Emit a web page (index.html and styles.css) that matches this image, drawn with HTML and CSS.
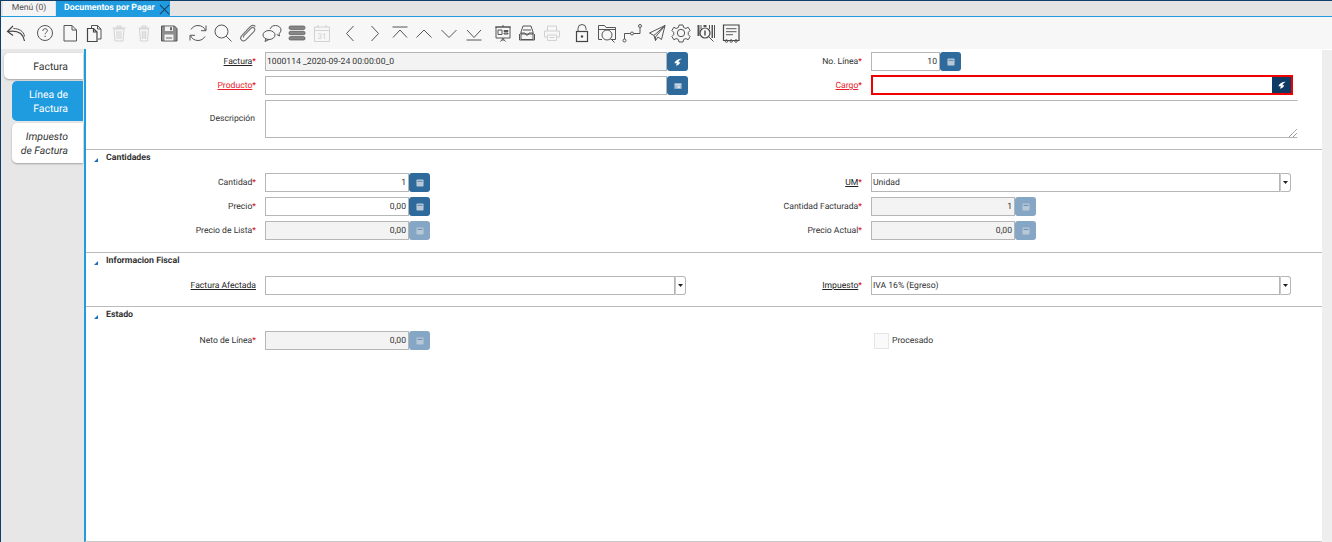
FILE: index.html
```html
<!DOCTYPE html>
<html lang="es">
<head>
<meta charset="utf-8">
<title>Documentos por Pagar</title>
<link rel="stylesheet" href="styles.css">
</head>
<body>
<svg class="defs" width="0" height="0" aria-hidden="true">
  <symbol id="calc" viewBox="-.5 -.5 9 9"><path d="M0 .8A.8.8 0 0 1 .8 0h6.400a.8.8 0 0 1 .8.8v6.400a.8.8 0 0 1-.8.8H.8a.8.8 0 0 1-.8-.8z" fill="#b8c8d7"/><path d="M1.200 1.600h5.600v1.100H1.200z" fill="#5f88ad"/></symbol>
  <symbol id="flash" viewBox="0 0 9 9"><path d="M8.800.8C5 .6 1.800 2.400.4 5.800h2.800L2.200 8.600C4.600 8.400 6.600 7 7 4.800H5C5.400 3.200 6.800 1.800 8.800.8z" fill="#fff"/></symbol>
  <symbol id="prod" viewBox="0 0 10 9"><path d="M.5 1h9v7h-9z" fill="#a9bfd3"/><path d="M1.500 2.300h7v1h-7z" fill="#dfe7ee"/><circle cx="6" cy="5.800" r="1.500" fill="#dfe7ee"/></symbol>
  <symbol id="caret" viewBox="0 0 5 3"><path d="M0 0h5L2.500 3z" fill="#222"/></symbol>
</svg>

<nav class="tabbar">
  <div class="tab">Menú (0)</div>
  <div class="tab tab-active">Documentos por Pagar
    <svg class="tab-x" viewBox="0 0 12 12"><path d="M1 1l10 10M11 1L1 11" stroke="#1c3f66" stroke-width="1.100" fill="none"/></svg>
  </div>
</nav>

<div class="toolbar">
  <span class="tool"><svg viewBox="0 0 24 24"><path d="M9 5L3.500 10.500 9 14.500" class="s2"/><path d="M4 10.500c7-1 15 0 16.500 9.500" class="s2"/><path d="M9.500 7.500c5 0 10.500 2.500 11 8" class="s1"/></svg></span>
  <span class="tool grp"><svg viewBox="0 0 24 24"><circle cx="12" cy="12" r="7.500" class="s1"/><path d="M9.800 10c0-3 4.600-3 4.600-.3 0 1.700-2.300 1.800-2.300 3.500" class="s1"/><path d="M11.500 14.700h1.200v1.400h-1.200z" fill="#555"/></svg></span>
  <span class="tool"><svg viewBox="0 0 24 24"><path d="M6 4.500h8l4.500 4.500v11H6zM14 4.500V9h4.500" class="s1"/></svg></span>
  <span class="tool"><svg viewBox="0 0 24 24"><path d="M9.500 7V4.500h6l3.500 3.500v10h-3M15.500 4.500V8H19" class="s1"/><path d="M5.500 7.500h6l3.500 3.500v9.500H5.500zM11.500 7.500V11H15" class="s2"/></svg></span>
  <span class="tool off"><svg viewBox="0 0 24 24"><path d="M7 8h10l-1 12H8zM5.500 7h13M10 5h4v2h-4zM10 10v8M12 10v8M14 10v8" class="s1"/></svg></span>
  <span class="tool off"><svg viewBox="0 0 24 24"><path d="M7.500 8h9l-1 12h-7zM6.500 7h11M10 5h4v2h-4zM10.300 10v8M12 10v8M13.700 10v8" class="s1"/></svg></span>
  <span class="tool nudge"><svg viewBox="0 0 24 24"><path d="M4.500 5h13l2.500 2.500V20H4.500z" fill="#8d8d8d" stroke="#555"/><path d="M8 5.500h8V10H8z" fill="#f2f2f2"/><path d="M13 6.200h2v3h-2z" fill="#666"/><path d="M7.500 13.500h9v6h-9z" fill="#f2f2f2"/><path d="M9 16.500h6v1H9z" fill="#666"/></svg></span>
  <span class="tool grp"><svg viewBox="0 0 24 24"><path d="M19.500 9.500C18.500 6.500 15.500 4.500 12 4.500c-3 0-5.500 1.500-7 4M4.500 14.500c1 3 4 5 7.500 5 3 0 5.500-1.500 7-4" class="s1"/><path d="M20 4.500v5.200h-5M4 19.500v-5.200h5" class="s1"/></svg></span>
  <span class="tool"><svg viewBox="0 0 24 24"><circle cx="10.500" cy="10.500" r="6.500" class="s1"/><path d="M15.200 15.200L20.500 20.500" class="s1"/></svg></span>
  <span class="tool"><svg viewBox="0 0 24 24"><path d="M19.500 5.500c-1.800-1.800-4-1.300-5.500.3l-8 8.500c-1.800 2-1.600 3.700-.5 4.800s3 1.200 4.600-.4l8-8.400c1-1.100.9-2.500 0-3.300s-2.200-.8-3.200.3l-7 7.300c-.7.800-.6 1.500-.2 1.900" class="s3"/></svg></span>
  <span class="tool"><svg viewBox="0 0 24 24"><ellipse cx="9" cy="14" rx="6" ry="4.500" class="s1"/><path d="M6 17.500l-1 3 4-2" class="s1"/><path d="M10 8c1-2.500 3.200-3.500 5.500-3.500 3 0 5.500 2 5.500 4.500 0 1.500-.8 2.800-2 3.600l.5 2.400-2.800-1.600" class="s1"/></svg></span>
  <span class="tool"><svg viewBox="0 0 24 24"><rect x="4" y="5" width="16" height="3.400" rx="1.500" fill="#888" stroke="#555" stroke-width=".7"/><rect x="4" y="10.300" width="16" height="3.400" rx="1.500" fill="#888" stroke="#555" stroke-width=".7"/><rect x="4" y="15.600" width="16" height="3.400" rx="1.500" fill="#888" stroke="#555" stroke-width=".7"/></svg></span>
  <span class="tool off"><svg viewBox="0 0 24 24"><path d="M4.500 6h15v14.500h-15zM4.500 9.500h15M8 4v3M16 4v3" class="s1"/><text x="12" y="18" class="cal">31</text></svg></span>
  <span class="tool grp"><svg viewBox="0 0 24 24"><path d="M15.500 5l-7 7.500 7 7.500" class="s1"/></svg></span>
  <span class="tool"><svg viewBox="0 0 24 24"><path d="M8.500 5l7 7.500-7 7.500" class="s1"/></svg></span>
  <span class="tool"><svg viewBox="0 0 24 24"><path d="M4.500 6h15M5 16.500L12 9l7 7.500" class="s1"/></svg></span>
  <span class="tool"><svg viewBox="0 0 24 24"><path d="M4.500 16.500L12 9l7.500 7.500" class="s1"/></svg></span>
  <span class="tool"><svg viewBox="0 0 24 24"><path d="M4.500 9l7.500 7.500L19.500 9" class="s1"/></svg></span>
  <span class="tool"><svg viewBox="0 0 24 24"><path d="M4.500 19h15M5 9l7 7.500L19 9" class="s1"/></svg></span>
  <span class="tool grp"><svg viewBox="-1 0 24 24"><path d="M5 6h14v11H5zM4 6h16M12 4v2M12 17v3M9.500 20.500l2.500-3 2.500 3" class="s1"/><path d="M7 9h4v4.500H7zM13 9.500h4v1h-4zM13 12h4v1h-4z" class="s1"/></svg></span>
  <span class="tool"><svg viewBox="0 0 24 24"><path d="M8 5h8l2 6v2H6v-2zM8 9h8M6 12h4l1 2h2l1-2h4v6.500H6zM4.500 13v6h15v-6" class="s1"/></svg></span>
  <span class="tool off"><svg viewBox="0 0 24 24"><path d="M7.500 10V5h9v5M7.500 16H4.500v-6h15v6h-3M7.500 14h9v5.500h-9zM9.500 16.500h5" class="s1"/></svg></span>
  <span class="tool grp lockgap"><svg viewBox="0 0 24 24"><path d="M8 10V7.500a4 4 0 0 1 8 0V9" class="s1"/><rect x="6.500" y="10.500" width="11" height="10" class="s2"/><circle cx="12" cy="15.500" r="1.200" fill="#444"/></svg></span>
  <span class="tool"><svg viewBox="0 0 24 24"><path d="M3.500 18.500V4.500h6l1.500 2h9.500v12h-5M3.500 8.500h17M3.500 18.500H7" class="s1"/><circle cx="12" cy="14" r="5" class="s1"/><path d="M15.500 17.500l4 4" class="s1"/></svg></span>
  <span class="tool"><svg viewBox="0 0 24 24"><circle cx="4.500" cy="19.500" r="1.500" class="s1"/><circle cx="12" cy="12.500" r="1.500" class="s1"/><circle cx="20" cy="5" r="1.500" class="s1"/><path d="M4.500 18v-5.500h6M13.500 12.500h6.500V6.500" class="s1"/></svg></span>
  <span class="tool"><svg viewBox="0 0 24 24"><path d="M20 4.500L4.500 12l4.500 2.500 1.500 5 2.500-3.500 3.500 2.500zM20 4.500L9 14.500M20 4.500L10.500 16v3.500" class="s1"/></svg></span>
  <span class="tool"><svg viewBox="0 0 24 24"><path d="M10 4h4l.6 2.500 2.300 1 2.200-1.300 2 3.300-1.800 1.800v2.400l1.800 1.800-2 3.300-2.200-1.300-2.300 1-.6 2.500h-4l-.6-2.500-2.300-1-2.200 1.300-2-3.300 1.800-1.800v-2.400L2.900 9.500l2-3.300 2.200 1.300 2.300-1z" class="s1"/><circle cx="12" cy="12" r="3.700" class="s1"/></svg></span>
  <span class="tool"><svg viewBox="0 0 24 24"><path d="M3.500 4h2v11h-2zM6.500 4h1v4h-1zM17.500 4h1.500v13h-1.500zM20 4h1v13h-1zM15 4h1v4h-1zM9.500 4h3v2h-3z" fill="#555"/><circle cx="11" cy="12" r="5" class="s2"/><path d="M10.300 9.500h1.400v5h-1.400z" fill="#444"/><path d="M14.500 15.500l5 5" class="s1"/></svg></span>
  <span class="tool"><svg viewBox="0 0 24 24"><path d="M4.500 4h15.500v15.500H4.500z" class="s2"/><path d="M7 7h10.500v1.300H7zM7 10h10.500v1.300H7zM7 13h7v1.300H7z" fill="#777"/><circle cx="7.500" cy="20" r="1.300" class="s1"/><circle cx="12.200" cy="20" r="1.300" class="s1"/><circle cx="17" cy="20" r="1.300" class="s1"/></svg></span>
</div>

<div class="main">
  <aside class="sidebar">
    <div class="vtab vtab-first">Factura</div>
    <div class="vtab vtab-selected">Línea de Factura</div>
    <div class="vtab vtab-italic">Impuesto de Factura</div>
  </aside>

  <main class="content">
    <section class="block block-top">
      <div class="grid">
        <div class="lbl"><u>Factura</u><b>*</b></div>
        <div class="cell"><div class="field ro f-main">1000114 _2020-09-24 00:00:00_0</div><span class="btn"><svg class="ico"><use href="#flash"/></svg></span></div>
        <div class="lbl">No. Línea<b>*</b></div>
        <div class="cell"><div class="field num f-small">10</div><span class="btn"><svg class="ico"><use href="#calc"/></svg></span></div>

        <div class="lbl lbl-err"><u>Producto</u><b>*</b></div>
        <div class="cell"><div class="field f-main"></div><span class="btn"><svg class="ico"><use href="#prod"/></svg></span></div>
        <div class="lbl lbl-err"><u>Cargo</u><b>*</b></div>
        <div class="cell"><div class="focus-box"><div class="field bare"></div><span class="btn btn-focus"><svg class="ico"><use href="#flash"/></svg></span></div></div>

        <div class="lbl lbl-area">Descripción</div>
        <div class="cell cell-wide"><div class="field area">
          <svg class="grip" viewBox="0 0 8 8"><path d="M0 8l8-8M4 8l4-4" stroke="#444" stroke-width=".8" stroke-dasharray="1 .6" fill="none"/></svg>
        </div></div>
      </div>
    </section>

    <section class="block block-qty">
      <h2 class="head"><i class="tri"></i>Cantidades</h2>
      <div class="grid">
        <div class="lbl">Cantidad<b>*</b></div>
        <div class="cell"><div class="field num f-num">1</div><span class="btn"><svg class="ico"><use href="#calc"/></svg></span></div>
        <div class="lbl"><u>UM</u><b>*</b></div>
        <div class="cell"><div class="field f-select">Unidad</div><span class="drop"><svg class="caret"><use href="#caret"/></svg></span></div>

        <div class="lbl">Precio<b>*</b></div>
        <div class="cell"><div class="field num f-num">0,00</div><span class="btn"><svg class="ico"><use href="#calc"/></svg></span></div>
        <div class="lbl">Cantidad Facturada<b>*</b></div>
        <div class="cell"><div class="field ro num f-num">1</div><span class="btn btn-off"><svg class="ico"><use href="#calc"/></svg></span></div>

        <div class="lbl">Precio de Lista<b>*</b></div>
        <div class="cell"><div class="field ro num f-num">0,00</div><span class="btn btn-off"><svg class="ico"><use href="#calc"/></svg></span></div>
        <div class="lbl">Precio Actual<b>*</b></div>
        <div class="cell"><div class="field ro num f-num">0,00</div><span class="btn btn-off"><svg class="ico"><use href="#calc"/></svg></span></div>
      </div>
    </section>

    <section class="block">
      <h2 class="head"><i class="tri"></i>Informacion Fiscal</h2>
      <div class="grid">
        <div class="lbl"><u>Factura Afectada</u></div>
        <div class="cell"><div class="field f-sel2"></div><span class="drop"><svg class="caret"><use href="#caret"/></svg></span></div>
        <div class="lbl"><u>Impuesto</u><b>*</b></div>
        <div class="cell"><div class="field f-select">IVA 16% (Egreso)</div><span class="drop"><svg class="caret"><use href="#caret"/></svg></span></div>
      </div>
    </section>

    <section class="block block-last">
      <h2 class="head head-tall"><i class="tri"></i>Estado</h2>
      <div class="grid">
        <div class="lbl">Neto de Línea<b>*</b></div>
        <div class="cell"><div class="field ro num f-num">0,00</div><span class="btn btn-off"><svg class="ico"><use href="#calc"/></svg></span></div>
        <div class="lbl"></div>
        <div class="check"><span class="box"></span><span class="check-text">Procesado</span></div>
      </div>
    </section>
  </main>

  <div class="rail"></div>
</div>
</body>
</html>
```
FILE: styles.css
```css
* { box-sizing: border-box; }
html, body { margin: 0; height: 100%; }
body {
  width: 1332px;
  height: 542px;
  overflow: hidden;
  display: flex;
  flex-direction: column;
  background: #fff;
  color: #333;
  font: 8.6px Roboto, "Noto Sans", sans-serif;
  text-rendering: geometricPrecision;
  border-top: 1px solid #123f68;
  border-left: 1px solid #123f68;
}
.defs { position: absolute; }

.tabbar {
  display: flex;
  height: 16px;
  padding-left: 2px;
  background: #e4e4e4;
  border-bottom: 1px solid #1f9be0;
  flex: none;
}
.tab {
  width: 52px;
  height: 15px;
  background: #f4f4f4;
  color: #555;
  text-align: center;
  line-height: 15px;
}
.tab-active {
  width: 114px;
  margin-left: 1px;
  padding-left: 8px;
  background: #1f9be0;
  color: #fff;
  font-weight: 700;
  font-size: 8.8px;
  text-align: left;
  position: relative;
}
.tab-x {
  position: absolute;
  right: 0;
  top: 3px;
  width: 11px;
  height: 11px;
}

.toolbar {
  display: flex;
  align-items: center;
  height: 32px;
  flex: none;
  padding-left: 3px;
  background: #f7f7f7;
}
.tool { width: 24.7px; height: 24px; display: flex; justify-content: center; flex: none; }
.tool svg { width: 24px; height: 24px; flex: none; }
.grp { margin-left: 4px; }
.nudge { margin-left: 1px; }
.lockgap { margin-left: 6px; }
.off { opacity: .22; }
.s1 { fill: none; stroke: #555; stroke-width: 1; }
.s2 { fill: none; stroke: #444; stroke-width: 1.200; }
.s3 { fill: none; stroke: #777; stroke-width: 1.200; }
.cal { font: 8px Roboto, sans-serif; fill: #444; text-anchor: middle; }

.main { flex: 1; display: flex; min-height: 0; }
.sidebar {
  width: 83px;
  flex: none;
  padding: 4px 1px 0 3px;
  background: #e7e7e7;
  display: flex;
  flex-direction: column;
  align-items: flex-end;
  gap: 2px;
}
.vtab {
  width: 71px;
  height: 40px;
  padding: 7px 15px 0 4px;
  font-size: 10.4px;
  line-height: 14px;
  text-align: right;
  border-radius: 5px 0 0 5px;
  background: #fff;
  box-shadow: 0 1px 2px rgba(0,0,0,.3);
}
.vtab-first {
  width: 79px;
  height: 26px;
  color: #333;
}
.vtab-selected { background: #1f9be0; color: #fff; box-shadow: none; }
.vtab-italic { font-style: italic; color: #333; }

.content {
  flex: none;
  width: 1238px;
  border-left: 2px solid #1f9be0;
  border-bottom: 1px solid #c8c8c8;
  display: flex;
  flex-direction: column;
  background: #fff;
}
.rail { flex: 1; background: #eee; margin-top: 1px; }

.block { border-top: 1px solid #bcbcbc; padding-bottom: 11px; }
.block-top { border-top: 0; padding-top: 3px; }
.block-qty { padding-bottom: 12px; }
.block-last { padding-bottom: 0; }
.head {
  display: flex;
  align-items: center;
  height: 23px;
  margin: 0;
  padding: 0 0 7px 20px;
  font-size: 8.8px;
  font-weight: 700;
  color: #333;
  position: relative;
}
.head-tall { height: 24px; padding-bottom: 8px; }
.tri {
  position: absolute;
  left: 8px;
  top: 8px;
  width: 0;
  height: 0;
  border-left: 4px solid transparent;
  border-bottom: 4px solid #1f6fc0;
}

.grid {
  display: grid;
  grid-template-columns: 170px 434px 172px 1fr;
  row-gap: 5px;
}
.lbl { text-align: right; line-height: 21px; height: 19px; white-space: nowrap; }
.lbl u { text-underline-offset: 1px; color: #222; }
.lbl b { color: #e01020; font-weight: 400; }
.lbl-err u { color: #e8202a; }
.lbl-area { padding-right: 1px; height: 38px; line-height: 39px; }
.cell { display: flex; padding-left: 9px; min-width: 0; }
.cell-wide { grid-column: 2 / 5; padding-right: 24px; }

.field {
  height: 19px;
  border: 1px solid #b6b6b6;
  background: #fff;
  line-height: 19px;
  padding: 0 1px;
  white-space: nowrap;
  overflow: hidden;
  color: #333;
}
.ro { background: #f3f3f3; }
.num { text-align: right; padding-right: 2px; }
.f-main { width: 402px; }
.f-small { width: 69px; }
.f-num { width: 144px; }
.f-select { width: 409px; }
.f-sel2 { width: 410px; }
.area { flex: 1; height: 38px; position: relative; border-right-color: transparent; }
.grip { position: absolute; right: 0; bottom: 0; width: 8px; height: 8px; }

.focus-box {
  display: flex;
  width: 422px;
  height: 20px;
  margin-top: -1px;
  border: 2px solid #f00000;
}
.bare { flex: 1; border: 0; height: 16px; }
.btn {
  width: 21px;
  height: 19px;
  border-radius: 3px;
  background: #2f6a9d;
  display: flex;
  align-items: center;
  justify-content: center;
  flex: none;
}
.btn-off { background: #85a6c4; }
.btn-focus { width: 19px; height: 16px; background: #0e3a64; border-radius: 0; }
.ico { width: 8px; height: 8px; }
.drop {
  width: 11px;
  height: 19px;
  border: 1px solid #b6b6b6;
  border-left-color: #c8c8c8;
  border-radius: 0 3px 3px 0;
  background: #fff;
  display: flex;
  align-items: center;
  justify-content: center;
  flex: none;
}
.caret { width: 5px; height: 3px; }
.check {
  display: flex;
  align-items: center;
  padding-left: 12px;
  height: 19px;
}
.check-text { padding-top: 1px; }
.box {
  width: 15px;
  height: 16px;
  margin-right: 3px;
  border: 1px solid #e6e6e6;
  background: #fafafa;
}
```
